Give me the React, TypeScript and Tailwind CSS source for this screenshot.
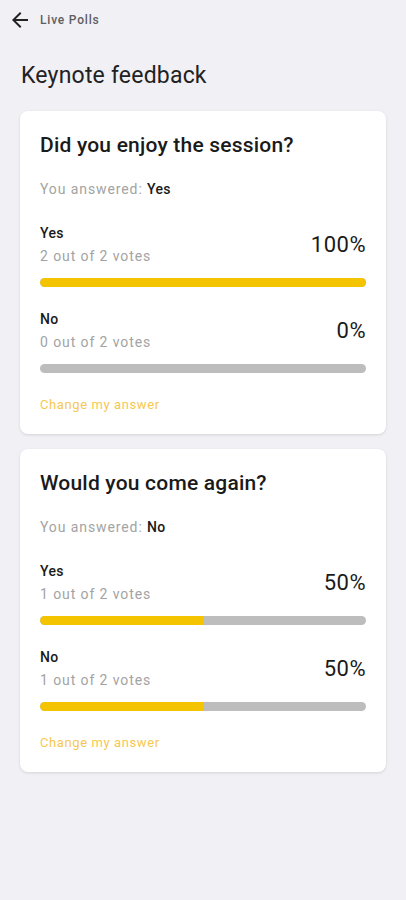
import React from 'react';

interface Option {
  label: string;
  votes: number;
}

interface Poll {
  question: string;
  answer: string;
  total: number;
  options: Option[];
}

const POLLS: Poll[] = [
  {
    question: 'Did you enjoy the session?',
    answer: 'Yes',
    total: 2,
    options: [
      { label: 'Yes', votes: 2 },
      { label: 'No', votes: 0 },
    ],
  },
  {
    question: 'Would you come again?',
    answer: 'No',
    total: 2,
    options: [
      { label: 'Yes', votes: 1 },
      { label: 'No', votes: 1 },
    ],
  },
];

function BackArrow() {
  return (
    <svg width="24" height="24" viewBox="0 0 24 24" fill="#222">
      <path d="M20 11H7.83l5.59-5.59L12 4l-8 8 8 8 1.41-1.41L7.83 13H20v-2z" />
    </svg>
  );
}

function PollCard({ poll }: { poll: Poll }) {
  return (
    <div className="bg-white rounded-lg shadow-[0_1px_3px_rgba(0,0,0,0.12)] px-5 pt-5 pb-5">
      <h2 className="text-[21px] leading-7 font-medium tracking-[0.2px] text-[#1a1a1a]">{poll.question}</h2>
      <p className="mt-5 text-[14px] leading-5 tracking-[0.9px] text-[#a3a3a3]">
        You answered: <span className="font-medium tracking-[0.3px] text-[#1a1a1a]">{poll.answer}</span>
      </p>
      {poll.options.map((opt, i) => {
        const pct = Math.round((opt.votes / poll.total) * 100);
        return (
          <div key={opt.label} className={i === 0 ? 'mt-6' : 'mt-[22px]'}>
            <div className="flex items-center justify-between">
              <div>
                <p className="text-[14px] leading-5 font-medium tracking-[0.3px] text-[#1a1a1a]">{opt.label}</p>
                <p className="mt-[3px] text-[14px] leading-5 tracking-[0.9px] text-[#a3a3a3]">
                  {opt.votes} out of {poll.total} votes
                </p>
              </div>
              <span className="text-[22px] leading-7 tracking-[0.5px] text-[#1a1a1a]">{pct}%</span>
            </div>
            <div className="mt-3 h-[9px] rounded-full bg-[#bdbdbd] overflow-hidden">
              <div className="h-full bg-[#f5c400] rounded-l-full" style={{ width: `${pct}%` }} />
            </div>
          </div>
        );
      })}
      <p className="mt-[23px] text-[13px] leading-[18px] tracking-[0.6px] text-[#f6c850]">Change my answer</p>
    </div>
  );
}

export default function App() {
  return (
    <div
      className="min-h-[900px] w-[406px] bg-[#f0f0f5]"
      style={{ fontFamily: 'Roboto, "Liberation Sans", sans-serif' }}
    >
      <div className="flex items-center h-10 pl-2">
        <BackArrow />
        <span className="ml-2 text-[12px] font-medium tracking-[0.8px] text-[#5f5f5f]">Live Polls</span>
      </div>
      <h1 className="mt-[22px] px-[21px] text-[23px] leading-7 tracking-[0.2px] text-[#222]">Keynote feedback</h1>
      <div className="mt-[21px] px-5 flex flex-col gap-[15px]">
        {POLLS.map((p) => (
          <PollCard key={p.question} poll={p} />
        ))}
      </div>
    </div>
  );
}
